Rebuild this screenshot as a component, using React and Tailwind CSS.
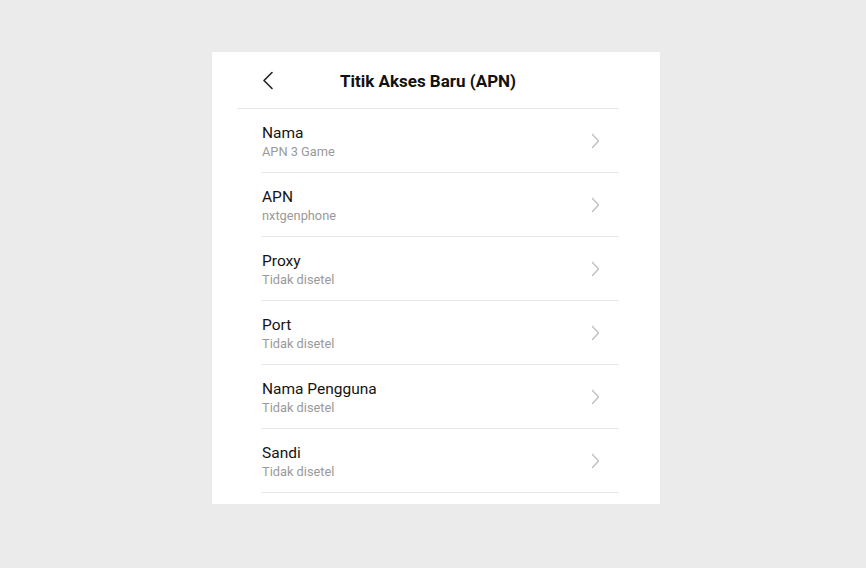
import React from "react";

const rows = [
  ["Nama", "APN 3 Game"],
  ["APN", "nxtgenphone"],
  ["Proxy", "Tidak disetel"],
  ["Port", "Tidak disetel"],
  ["Nama Pengguna", "Tidak disetel"],
  ["Sandi", "Tidak disetel"],
];

function Chevron() {
  return (
    <svg width="9" height="16" viewBox="0 0 9 16" fill="none" className="shrink-0">
      <path d="M1.5 1.5 L7.5 8 L1.5 14.5" stroke="#bdbdbd" strokeWidth="1.2" strokeLinecap="round" strokeLinejoin="round" />
    </svg>
  );
}

export default function App() {
  return (
    <div className="min-h-[568px] w-full bg-[#ebebeb] pt-[52px] pl-[212px]" style={{ fontFamily: "Roboto, 'Noto Sans', sans-serif" }}>
      <div className="w-[448px] h-[452px] bg-white overflow-hidden">
        <div className="ml-[25px] w-[382px] h-[57px] border-b border-[#e6e6e6] flex items-center relative">
          <svg width="12" height="20" viewBox="0 0 12 20" fill="none" className="absolute left-[25px] top-[19px]">
            <path d="M10 1.5 L2 9.5 L10 17.5" stroke="#222" strokeWidth="1.6" strokeLinecap="round" strokeLinejoin="round" />
          </svg>
          <div className="w-full text-center text-[17px] font-bold text-[#111] pt-[3px]">Titik Akses Baru (APN)</div>
        </div>
        <div className="ml-[50px] w-[357px]">
          {rows.map(([t, s]) => (
            <div key={t} className="h-[64px] border-b border-[#e6e6e6] flex items-center justify-between pr-[19px]">
              <div className="flex flex-col pt-[2px]">
                <div className="text-[15.5px] leading-[20px] text-[#141414]">{t}</div>
                <div className="text-[12.8px] leading-[17px] text-[#9a9a9a]">{s}</div>
              </div>
              <Chevron />
            </div>
          ))}
        </div>
      </div>
    </div>
  );
}
